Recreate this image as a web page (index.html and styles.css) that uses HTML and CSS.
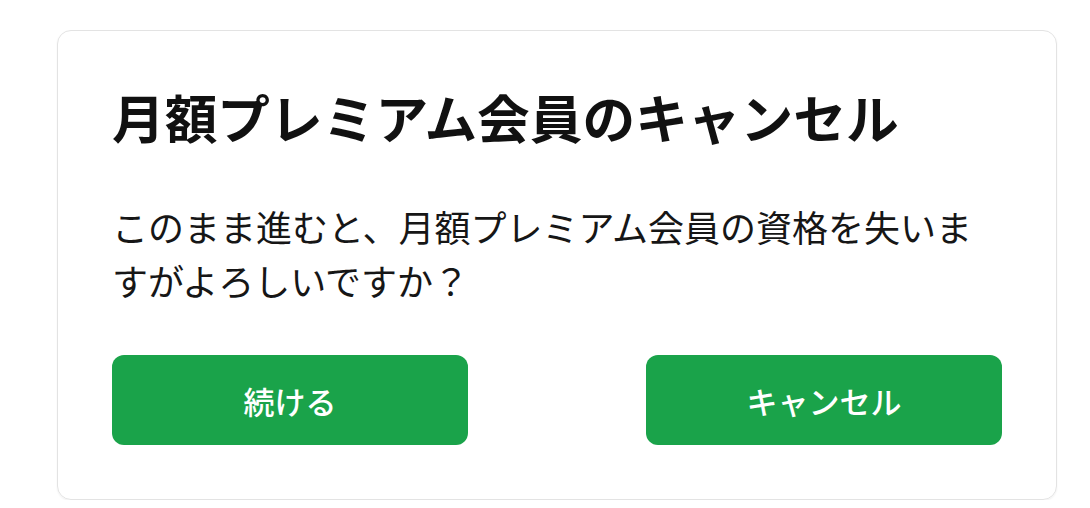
FILE: index.html
```html
<!DOCTYPE html>
<html lang="ja">
<head>
<meta charset="utf-8">
<link rel="stylesheet" href="styles.css">
</head>
<body>
<div class="card">
  <h1 class="title">月額プレミアム会員のキャンセル</h1>
  <p class="message">このまま進むと、月額プレミアム会員の資格を失いますがよろしいですか？</p>
  <div class="actions">
    <button class="btn">続ける</button>
    <button class="btn">キャンセル</button>
  </div>
</div>
</body>
</html>
```
FILE: styles.css
```css
html, body {
  margin: 0;
  padding: 0;
  background: #ffffff;
}
body {
  font-family: "Noto Sans CJK JP", "Noto Sans", sans-serif;
  color: #141414;
  padding: 30px 0 0 57px;
}
.card {
  box-sizing: border-box;
  width: 1000px;
  border: 1px solid #e3e3e3;
  border-radius: 14px;
  padding: 54px;
  box-shadow: 0 1px 2px rgba(0,0,0,0.06);
}
.title {
  margin: 0;
  font-size: 52.7px;
  line-height: 62px;
  font-weight: 700;
  color: #111;
}
.message {
  margin: 52px 0 0;
  font-size: 36px;
  line-height: 54px;
  color: #161616;
}
.actions {
  display: flex;
  justify-content: space-between;
  margin-top: 48px;
}
.btn {
  width: 356px;
  height: 90px;
  border: none;
  border-radius: 12px;
  background: #1aa34a;
  color: #fff;
  font-family: "Noto Sans CJK JP", "Noto Sans", sans-serif;
  font-size: 31px;
  font-weight: 500;
  padding: 0;
}
```
